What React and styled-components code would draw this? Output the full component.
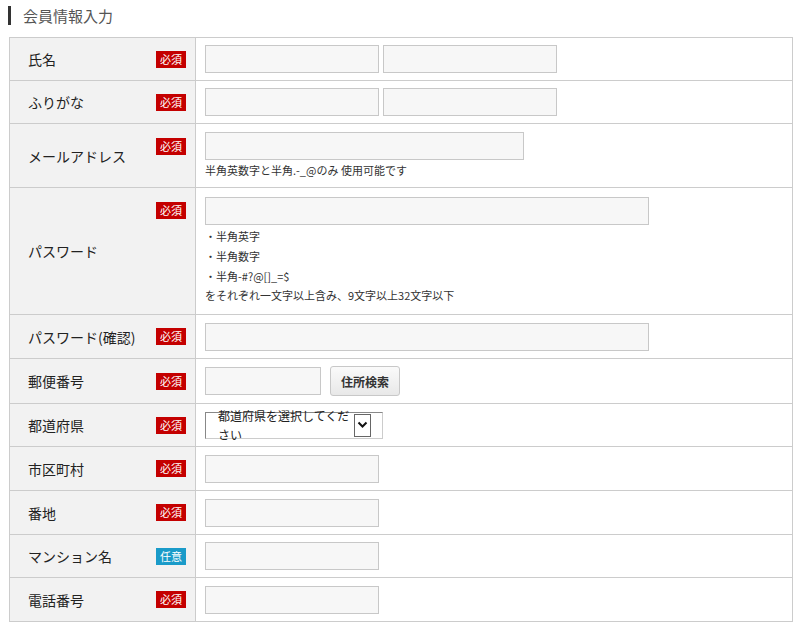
import React from "react";
import styled, { createGlobalStyle } from "styled-components";

const GlobalStyle = createGlobalStyle`
  body {
    margin: 0;
    background: #fff;
    font-family: "Noto Sans CJK JP", "Liberation Sans", sans-serif;
    color: #222;
  }
`;

const Page = styled.div`
  padding: 6px 7px 0 9px;
`;

const Heading = styled.h2`
  margin: 0 0 12px -1px;
  padding-left: 12px;
  border-left: 3px solid #333;
  font-size: 15px;
  font-weight: normal;
  line-height: 19px;
  color: #555;
`;

const Table = styled.div`
  display: grid;
  grid-template-columns: 186px 1fr;
  border-top: 1px solid #ccc;
  border-left: 1px solid #ccc;
`;

const Label = styled.div`
  background: #f2f2f2;
  border-right: 1px solid #ccc;
  border-bottom: 1px solid #ccc;
  display: flex;
  align-items: ${(p) => (p.$top ? "stretch" : "center")};
  justify-content: space-between;
  padding: 0 9px 0 18px;
  font-size: 14px;
  min-height: ${(p) => p.$h}px;
  box-sizing: border-box;
`;

const LabelText = styled.span`
  align-self: center;
`;

const Badge = styled.span`
  background: ${(p) => (p.$optional ? "#1a9bc9" : "#c40000")};
  color: #fff;
  font-size: 11px;
  line-height: 17px;
  height: 17px;
  padding: 0 4px;
  align-self: ${(p) => (p.$top ? "flex-start" : "center")};
  margin-top: ${(p) => (p.$top ? "14px" : "0")};
`;

const Cell = styled.div`
  border-right: 1px solid #ccc;
  border-bottom: 1px solid #ccc;
  padding: 7px 9px;
  display: flex;
  flex-direction: column;
  justify-content: center;
  font-size: 11px;
  line-height: 19px;
  color: #333;
`;

const Line = styled.div`
  display: flex;
  gap: 4px;
  align-items: center;
`;

const Input = styled.div`
  width: ${(p) => p.$w}px;
  height: 28px;
  box-sizing: border-box;
  border: 1px solid #c8c8c8;
  background: #f7f7f7;
`;

const Note = styled.div`
  margin-top: ${(p) => p.$mt || 0}px;
`;

const Button = styled.div`
  margin-left: 5px;
  height: 28px;
  padding: 0 10px;
  display: flex;
  align-items: center;
  border: 1px solid #c8c8c8;
  border-radius: 3px;
  background: linear-gradient(#fafafa, #e8e8e8);
  font-weight: bold;
  font-size: 12px;
  color: #333;
`;

const Select = styled.div`
  width: 178px;
  height: 27px;
  box-sizing: border-box;
  border: 1px solid #ccc;
  border-top-color: #888;
  border-left-color: #888;
  display: flex;
  align-items: center;
  justify-content: space-between;
  padding-left: 12px;
  font-size: 12px;
  color: #222;
`;

const Arrow = styled.span`
  width: 17px;
  height: 21px;
  margin-right: 11px;
  border: 1px solid #666;
  display: flex;
  align-items: center;
  justify-content: center;
`;

const Row = ({ label, h, optional, top, children }) => (
  <>
    <Label $h={h} $top={top}>
      <LabelText>{label}</LabelText>
      <Badge $optional={optional} $top={top}>
        {optional ? "任意" : "必須"}
      </Badge>
    </Label>
    <Cell>{children}</Cell>
  </>
);

const App = () => (
  <Page>
    <GlobalStyle />
    <Heading>会員情報入力</Heading>
    <Table>
      <Row label="氏名" h={43}>
        <Line>
          <Input $w={174} />
          <Input $w={174} />
        </Line>
      </Row>
      <Row label="ふりがな" h={43}>
        <Line>
          <Input $w={174} />
          <Input $w={174} />
        </Line>
      </Row>
      <Row label="メールアドレス" h={64} top>
        <Input $w={319} />
        <Note $mt={1}>半角英数字と半角.-_@のみ 使用可能です</Note>
      </Row>
      <Row label="パスワード" h={127} top>
        <Input $w={444} />
        <Note $mt={2}>・半角英字</Note>
        <Note $mt={1}>・半角数字</Note>
        <Note $mt={1}>・半角-#?@[]_=$</Note>
        <Note>をそれぞれ一文字以上含み、9文字以上32文字以下</Note>
      </Row>
      <Row label="パスワード(確認)" h={44}>
        <Input $w={444} />
      </Row>
      <Row label="郵便番号" h={44}>
        <Line>
          <Input $w={116} />
          <Button>住所検索</Button>
        </Line>
      </Row>
      <Row label="都道府県" h={43}>
        <Select>
          都道府県を選択してください
          <Arrow>
            <svg width="11" height="8" viewBox="0 0 11 8">
              <path d="M1.5 1.5 L5.5 5.5 L9.5 1.5" stroke="#111" strokeWidth="2" fill="none" />
            </svg>
          </Arrow>
        </Select>
      </Row>
      <Row label="市区町村" h={44}>
        <Input $w={174} />
      </Row>
      <Row label="番地" h={44}>
        <Input $w={174} />
      </Row>
      <Row label="マンション名" h={43} optional>
        <Input $w={174} />
      </Row>
      <Row label="電話番号" h={44}>
        <Input $w={174} />
      </Row>
    </Table>
  </Page>
);

export default App;
